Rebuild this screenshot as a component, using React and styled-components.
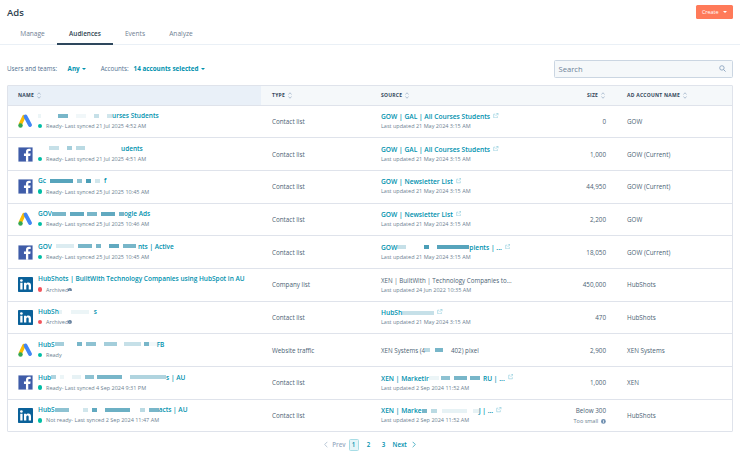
import React from "react";
import styled, { createGlobalStyle } from "styled-components";

const GlobalStyle = createGlobalStyle`
    html, body { margin: 0; padding: 0; background: #fff; }
    body { font-family: "Open Sans", "Liberation Sans", sans-serif; color: #33475b; }
    #root { width: 740px; height: 457px; overflow: hidden; }
`;

const Page = styled.div`
    display: flex;
    flex-direction: column;
    width: 740px;
    height: 457px;
`;
const Header = styled.div`
    display: flex;
    justify-content: space-between;
    align-items: center;
    height: 20px;
    padding: 2px 7px 0;
`;
const Title = styled.h1`
    margin: 0;
    font-size: 9.5px;
    font-weight: 600;
    color: #2e3f50;
`;
const CreateButton = styled.button`
    display: flex;
    align-items: center;
    gap: 2px;
    height: 14px;
    width: 37px;
    justify-content: center;
    padding: 0;
    border: none;
    border-radius: 1.5px;
    background: #ff7a59;
    color: #fff;
    font: 400 5.4px "Open Sans", sans-serif;
`;
const Caret = styled.span`
    display: inline-block;
    width: 0;
    height: 0;
    margin-left: 2.5px;
    border-left: 2px solid transparent;
    border-right: 2px solid transparent;
    border-top: 2.2px solid ${props => props.$color || "currentColor"};
`;
const Tabs = styled.div`
    display: flex;
    height: 21.5px;
    padding: 0 0 0 8px;
    border-bottom: 1.5px solid #eaf0f6;
`;
const Tab = styled.div`
    display: flex;
    align-items: center;
    justify-content: center;
    width: ${props => props.$w}px;
    height: 23px;
    padding-top: 2px;
    font-size: ${props => (props.$active ? 6.4 : 6.6)}px;
    font-weight: ${props => (props.$active ? 600 : 400)};
    color: ${props => (props.$active ? "#2e3f50" : "#6f8093")};
    border-bottom: 2px solid ${props => (props.$active ? "#2e475d" : "transparent")};
    box-sizing: border-box;
`;
const Filters = styled.div`
    display: flex;
    align-items: center;
    justify-content: space-between;
    height: 18px;
    margin: 15px 7px 7px;
    font-size: 6.2px;
    color: #516f90;
`;
const FilterGroup = styled.div`
    display: flex;
    align-items: center;
`;
const FilterValue = styled.span`
    display: flex;
    align-items: center;
    margin: 0 ${props => props.$after}px 0 ${props => props.$before}px;
    font-size: 6.3px;
    color: #0091ae;
    font-weight: 700;
`;
const SearchBox = styled.div`
    display: flex;
    align-items: center;
    justify-content: space-between;
    box-sizing: border-box;
    width: 179px;
    height: 18px;
    padding: 0 6px 0 3.5px;
    background: #f5f8fa;
    border: 1px solid #cbd6e2;
    border-radius: 1.5px;
    font-size: 7.6px;
    color: #6d8199;
`;
const Table = styled.div`
    margin: 0 7px;
    border: 1px solid #dfe3eb;
    border-radius: 1px;
`;
const Row = styled.div`
    display: grid;
    grid-template-columns: 253px 109px 185px 61px 1fr;
    height: ${props => (props.$head ? "19px" : "32.7px")};
    box-sizing: border-box;
    border-top: ${props => (props.$head ? "none" : "1px solid #dfe3eb")};
    background: ${props => (props.$head ? "#f5f8fa" : "#fff")};
`;
const HeadCell = styled.div`
    display: flex;
    align-items: center;
    padding-left: ${props => props.$pad ?? 11}px;
    font-size: 5px;
    font-weight: 700;
    letter-spacing: 0.25px;
    color: #33475b;
    background: ${props => (props.$sorted ? "#e9f0f8" : "transparent")};
`;
const SortArrows = styled.svg`
    width: 4px;
    height: 7px;
    margin-left: 3px;
`;
const Cell = styled.div`
    display: flex;
    flex-direction: column;
    justify-content: center;
    align-items: ${props => (props.$right ? "flex-end" : "flex-start")};
    padding: ${props => (props.$right ? "0 10px 0 0" : "0 0 0 11px")};
    font-size: 6.3px;
    color: #4b5f74;
    min-width: 0;
    white-space: nowrap;
`;
const NameCell = styled.div`
    display: flex;
    align-items: center;
    padding-left: 10px;
`;
const NameText = styled.div`
    display: flex;
    flex-direction: column;
    gap: 3.6px;
    margin: 0 0 1px 5px;
    white-space: nowrap;
`;
const Line = styled.div`
    display: flex;
    align-items: center;
    height: 7px;
    font-size: 6.5px;
    font-weight: ${props => (props.$link ? 600 : 400)};
    color: ${props => (props.$link ? "#0091ae" : "#4b5f74")};
`;
const SourceLine = styled(Line)`
    font-size: ${props => (props.$link ? 6.65 : 6.2)}px;
`;
const Sub = styled.div`
    display: flex;
    align-items: center;
    height: 7px;
    font-size: 5.5px;
    color: #6d7f92;
`;
const Dot = styled.span`
    width: 4.4px;
    height: 4.4px;
    margin: 0 3.6px 0 0;
    border-radius: 50%;
    background: ${props => (props.$red ? "#f2545b" : "#00bda5")};
`;
const Blot = styled.span`
    display: inline-block;
    flex: none;
    width: ${props => props.$w}px;
    height: 4px;
    background: #1f86a6;
    opacity: ${props => props.$o};
    filter: blur(0.4px);
`;
const SourceCell = styled(Cell)`
    gap: 2.5px;
`;
const TooSmall = styled(Sub)`
    gap: 3px;
    margin-top: 2.5px;
`;
const Pager = styled.div`
    display: flex;
    align-items: center;
    justify-content: center;
    height: 14px;
    margin: 5.5px 0 0;
    font-size: 6.2px;
    font-weight: 600;
    color: #0091ae;
`;
const PageLabel = styled.span`
    margin: 0 ${props => props.$after || 0}px 0 ${props => props.$before || 0}px;
    color: ${props => (props.$muted ? "#99acc2" : "#0091ae")};
`;
const PageNum = styled.span`
    display: flex;
    align-items: center;
    justify-content: center;
    box-sizing: border-box;
    width: 10px;
    height: 12.5px;
    margin-left: ${props => props.$gap}px;
    border-radius: 1.5px;
    border: ${props => (props.$on ? "1px solid #a7dde6" : "1px solid transparent")};
    background: ${props => (props.$on ? "#e5f5f8" : "transparent")};
`;

const GoogleIcon = () => (
    <svg width="15" height="15" viewBox="0 0 30 30">
        <path d="M12 5 L5 20" stroke="#fbbc04" strokeWidth="7" strokeLinecap="round" />
        <path d="M15 5 L24 22" stroke="#4285f4" strokeWidth="7.5" strokeLinecap="round" />
        <circle cx="5" cy="23" r="4.5" fill="#34a853" />
    </svg>
);
const FacebookIcon = () => (
    <svg width="15" height="15" viewBox="0 0 30 30">
        <rect x="0.5" y="0.5" width="29" height="29" rx="1.5" fill="#3f5ca8" stroke="#c9d2e6" />
        <path
            d="M20.5 29.5 V18 h4 l.7-4.8 h-4.7 v-3 c0-1.4.5-2.3 2.4-2.3 h2.4 V3.7 c-.5-.1-1.9-.2-3.4-.2-3.6 0-6 2.2-6 6.2 v3.5 h-4 V18 h4 v11.5 z"
            fill="#fff"
        />
    </svg>
);
const LinkedinIcon = () => (
    <svg width="15" height="15" viewBox="0 0 30 30">
        <rect width="30" height="30" rx="1.5" fill="#0a6199" />
        <rect x="4.5" y="11.5" width="4.6" height="13.5" fill="#fff" />
        <circle cx="6.8" cy="7" r="2.7" fill="#fff" />
        <path
            d="M12 11.5 h4.4 v1.9 c.8-1.3 2.3-2.2 4.3-2.2 3.6 0 5.3 2.2 5.3 6 V25 h-4.6 v-7 c0-2-.7-3-2.3-3 -1.7 0-2.5 1.2-2.5 3 v7 H12 z"
            fill="#fff"
        />
    </svg>
);
const icons = { g: GoogleIcon, f: FacebookIcon, l: LinkedinIcon };

const Sort = () => (
    <SortArrows viewBox="0 0 8 14">
        <path d="M1 5 L4 1.5 L7 5 M1 9 L4 12.5 L7 9" fill="none" stroke="#7c98b6" strokeWidth="1.1" />
    </SortArrows>
);
const ExternalIcon = () => (
    <svg width="5.5" height="5.5" viewBox="0 0 12 12" style={{ marginLeft: 3, marginTop: -2 }}>
        <path
            d="M5 2.5 H1.5 V10.5 H9.5 V7 M7 1 H11 V5 M11 1 L5.5 6.5"
            fill="none"
            stroke="#7fc4d6"
            strokeWidth="1.2"
        />
    </svg>
);
const InfoIcon = ({ size = 4.5, color = "#516f90" }) => (
    <svg width={size} height={size} viewBox="0 0 10 10">
        <circle cx="5" cy="5" r="5" fill={color} />
        <rect x="4.2" y="4.2" width="1.6" height="3.6" fill="#fff" />
        <rect x="4.2" y="2" width="1.6" height="1.5" fill="#fff" />
    </svg>
);
const SearchIcon = () => (
    <svg width="7" height="7" viewBox="0 0 12 12">
        <circle cx="5" cy="5" r="3.8" fill="none" stroke="#7c98b6" strokeWidth="1.3" />
        <path d="M8 8 L11.3 11.3" stroke="#7c98b6" strokeWidth="1.4" />
    </svg>
);
const Chevron = ({ left, color }) => (
    <svg width="4" height="7" viewBox="0 0 6 10">
        <path
            d={left ? "M5 1 L1 5 L5 9" : "M1 1 L5 5 L1 9"}
            fill="none"
            stroke={color}
            strokeWidth="1"
        />
    </svg>
);

// text pieces: a string is shown as is, [width, opacity] is a redacted patch
const Pieces = ({ parts }) =>
    parts.map((part, i) =>
        typeof part === "string" ? (
            <span key={i} style={{ whiteSpace: "pre" }}>{part}</span>
        ) : (
            <Blot key={i} $w={part[0]} $o={part[1]} />
        )
    );

const gowGal = ["GOW | GAL | All Courses Students"];
const gowNews = ["GOW | Newsletter List"];
const updated = "Last updated 21 May 2024 3:15 AM";

const rows = [
    {
        icon: "g",
        name: [[3, 0.08], [17, 0], [10, 0.6], [8, 0], [10, 0.06], [8, 0], [5, 0.25], [8, 0], [5, 0.2], "urses Students"],
        status: "Ready- Last synced 21 Jul 2025 4:52 AM",
        type: "Contact list",
        source: gowGal,
        sub: updated,
        link: true,
        size: "0",
        account: "GOW",
    },
    {
        icon: "f",
        name: [[11, 0], [10, 0.25], [8, 0], [5, 0.4], [4, 0], [9, 0.3], [36, 0], "udents"],
        status: "Ready- Last synced 21 Jul 2025 4:51 AM",
        type: "Contact list",
        source: gowGal,
        sub: updated,
        link: true,
        size: "1,000",
        account: "GOW (Current)",
    },
    {
        icon: "f",
        name: ["Gc", [4, 0], [23, 0.75], [4, 0], [5, 0.5], [4, 0], [5, 0.8], [4, 0], [5, 0.2], [4, 0], "f"],
        status: "Ready- Last synced 25 Jul 2025 10:45 AM",
        type: "Contact list",
        source: gowNews,
        sub: updated,
        link: true,
        size: "44,950",
        account: "GOW (Current)",
    },
    {
        icon: "g",
        name: ["GOV", [14, 0.6], [4, 0], [14, 0.7], [3, 0], [10, 0.6], [4, 0], [14, 0.7], [4, 0], [5, 0.6], "ogle Ads"],
        status: "Ready- Last synced 25 Jul 2025 10:46 AM",
        type: "Contact list",
        source: gowNews,
        sub: updated,
        link: true,
        size: "2,200",
        account: "GOW",
    },
    {
        icon: "f",
        name: ["GOV", [4, 0], [18, 0.15], [4, 0], [14, 0.6], [4, 0], [5, 0.6], [8, 0], [10, 0.7], [4, 0], [13, 0.6], [2, 0], "nts | Active"],
        status: "Ready- Last synced 25 Jul 2025 10:45 AM",
        type: "Contact list",
        source: ["GOW", [9, 0.25], [18, 0], [5, 0.8], [8, 0], [32, 0.75], "pients | ..."],
        sub: updated,
        link: true,
        size: "18,050",
        account: "GOW (Current)",
    },
    {
        icon: "l",
        name: ["HubShots | BuiltWith Technology Companies using HubSpot in AU"],
        status: "Archived",
        red: true,
        info: true,
        type: "Company list",
        source: ["XEN | BuiltWith | Technology Companies to..."],
        sub: "Last updated 24 Jun 2022 10:35 AM",
        size: "450,000",
        account: "HubShots",
    },
    {
        icon: "l",
        name: ["HubSh", [3, 0.1], [9, 0], [18, 0.08], [5, 0], "s"],
        status: "Archived",
        red: true,
        info: true,
        type: "Contact list",
        source: ["HubSh", [32, 0.25]],
        sub: updated,
        link: true,
        size: "470",
        account: "HubShots",
    },
    {
        icon: "g",
        name: ["HubS", [9, 0.4], [13, 0], [5, 0.6], [4, 0], [10, 0.5], [8, 0], [13, 0.4], [7, 0], [17, 0.25], [3, 0], [5, 0.6], [8, 0.05], "FB"],
        status: "Ready",
        type: "Website traffic",
        source: ["XEN Systems (4", [5, 0.3], [5, 0], [8, 0.6], [8, 0], "402) pixel"],
        plain: true,
        size: "2,900",
        account: "XEN Systems",
    },
    {
        icon: "f",
        name: ["Hub", [5, 0.35], [4, 0], [4, 0.08], [8, 0], [9, 0.1], [4, 0], [9, 0.5], [3, 0], [25, 0.6], [8, 0], [36, 0.35], "s | AU"],
        status: "Ready- Last synced 4 Sep 2024 9:31 PM",
        type: "Contact list",
        source: ["XEN | Marketir", [10, 0.08], [2, 0], [9, 0.5], [4, 0], [13, 0.6], [3, 0], [10, 0.6], [3, 0], "RU | ..."],
        sub: "Last updated 2 Sep 2024 11:52 AM",
        link: true,
        size: "1,000",
        account: "XEN",
    },
    {
        icon: "l",
        name: ["HubS", [14, 0.5], [14, 0], [5, 0.2], [4, 0], [5, 0.7], [8, 0], [25, 0.65], [10, 0], [5, 0.3], [4, 0], [10, 0.6], "acts | AU"],
        status: "Not ready- Last synced 2 Sep 2024 11:47 AM",
        type: "Contact list",
        source: ["XEN | Marke", [5, 0.6], [4, 0], [6, 0.3], [5, 0], [25, 0.1], [6, 0], [6, 0.1], "J | ..."],
        sub: "Last updated 2 Sep 2024 11:52 AM",
        link: true,
        size: "Below 300",
        tooSmall: true,
        account: "HubShots",
    },
];

const AudienceRow = ({ row }) => {
    const Icon = icons[row.icon];
    return (
        <Row>
            <NameCell>
                <Icon />
                <NameText>
                    <Line $link>
                        <Pieces parts={row.name} />
                    </Line>
                    <Sub>
                        <Dot $red={row.red} />
                        {row.status}
                        {row.info && <InfoIcon size={3.8} />}
                    </Sub>
                </NameText>
            </NameCell>
            <Cell>{row.type}</Cell>
            <SourceCell>
                <SourceLine $link={row.link}>
                    <Pieces parts={row.source} />
                    {row.link && <ExternalIcon />}
                </SourceLine>
                {!row.plain && <Sub>{row.sub}</Sub>}
            </SourceCell>
            <Cell $right>
                {row.size}
                {row.tooSmall && (
                    <TooSmall>
                        Too small <InfoIcon size={4.8} color="#6f8fb0" />
                    </TooSmall>
                )}
            </Cell>
            <Cell>{row.account}</Cell>
        </Row>
    );
};

const App = () => (
    <Page>
        <GlobalStyle />
        <Header>
            <Title>Ads</Title>
            <CreateButton>
                Create
                <Caret />
            </CreateButton>
        </Header>
        <Tabs>
            <Tab $w={49}>Manage</Tab>
            <Tab $w={56} $active>Audiences</Tab>
            <Tab $w={44}>Events</Tab>
            <Tab $w={48}>Analyze</Tab>
        </Tabs>
        <Filters>
            <FilterGroup>
                Users and teams:
                <FilterValue $before={10.5} $after={14.5}>
                    Any
                    <Caret $color="#0091ae" />
                </FilterValue>
                Accounts:
                <FilterValue $before={5} $after={0}>
                    14 accounts selected
                    <Caret $color="#0091ae" />
                </FilterValue>
            </FilterGroup>
            <SearchBox>
                Search
                <SearchIcon />
            </SearchBox>
        </Filters>
        <Table>
            <Row $head>
                <HeadCell $sorted $pad={10}>NAME<Sort /></HeadCell>
                <HeadCell>TYPE<Sort /></HeadCell>
                <HeadCell>SOURCE<Sort /></HeadCell>
                <HeadCell $pad={32}>SIZE<Sort /></HeadCell>
                <HeadCell>AD ACCOUNT NAME<Sort /></HeadCell>
            </Row>
            {rows.map((row, i) => (
                <AudienceRow key={i} row={row} />
            ))}
        </Table>
        <Pager>
            <Chevron left color="#99acc2" />
            <PageLabel $muted $before={4} $after={3}>Prev</PageLabel>
            <PageNum $on $gap={0}>1</PageNum>
            <PageNum $gap={5}>2</PageNum>
            <PageNum $gap={5}>3</PageNum>
            <PageLabel $before={4} $after={5}>Next</PageLabel>
            <Chevron color="#0091ae" />
        </Pager>
    </Page>
);

export default App;
